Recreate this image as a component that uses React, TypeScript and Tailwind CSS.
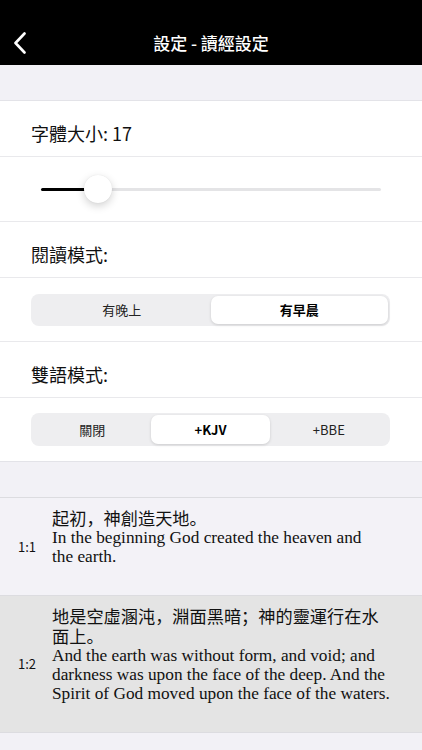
import React from "react";

const ui = { fontFamily: '"Noto Sans CJK TC", "Noto Sans", Roboto, sans-serif' };
const zhFont = { fontFamily: '"Noto Sans CJK SC", "Noto Sans CJK TC", sans-serif' };
const serif = { fontFamily: '"Liberation Serif", "Noto Sans CJK SC", serif' };

function Segmented({ items, selected }: { items: string[]; selected: number }) {
  return (
    <div className="flex h-full rounded-[8px] bg-[#eeeef0] p-[2px]">
      {items.map((it, i) => (
        <div
          key={it}
          className={
            i === selected
              ? "flex flex-1 items-center justify-center rounded-[7px] bg-white text-[13px] font-semibold text-black shadow-[0_1px_3px_rgba(0,0,0,0.15)]"
              : "flex flex-1 items-center justify-center text-[13px] text-[#222]"
          }
        >
          {it}
        </div>
      ))}
    </div>
  );
}

function Verse({ num, zh, en, bg, w }: { num: string; zh: string; en: string; bg: string; w: string }) {
  return (
    <div className={`flex border-b border-[#dcdce0] ${bg}`}>
      <div className="flex w-[52px] shrink-0 items-center pl-[18px] text-[13px] text-[#111]" style={ui}>
        {num}
      </div>
      <div className={`${w} pt-[10px] pb-[29px]`}>
        <div className="text-[17.2px] leading-[20px] text-[#111]" style={zhFont}>
          {zh}
        </div>
        <div className="text-[17.3px] leading-[19px] text-[#111]" style={serif}>
          {en}
        </div>
      </div>
    </div>
  );
}

export default function App() {
  return (
    <div className="min-h-[750px] w-[422px] bg-[#f2f1f6]" style={ui}>
      <div className="grid h-[65px] grid-cols-[60px_1fr_60px] items-center bg-black pt-[31px] pb-[10px]">
        <div className="flex items-center pl-[13px]">
          <svg width="14" height="22" viewBox="0 0 14 22" fill="none">
            <path d="M11.5 1.5 L2.5 11 L11.5 20.5" stroke="white" strokeWidth="2.6" strokeLinecap="round" strokeLinejoin="round" />
          </svg>
        </div>
        <div className="text-center text-[17px] font-medium leading-[24px] text-white">設定 - 讀經設定</div>
        <div />
      </div>
      <div className="h-[36px] border-b border-[#e3e3e8] bg-[#f2f1f6]" />
      <div className="bg-white">
        <div className="h-[56px] border-b border-[#e9e9ec] pl-[31px] pt-[20px] text-[18px] leading-[24px] text-[#111]">
          字體大小: 17
        </div>
        <div className="flex h-[65px] items-center border-b border-[#e9e9ec] px-[41px]">
          <div className="relative flex h-[28px] w-full items-center">
            <div className="h-[3px] w-[48px] rounded-full bg-black" />
            <div className="h-[3px] flex-1 rounded-full bg-[#e4e4e6]" />
            <div className="absolute left-[43px] top-0 h-[28px] w-[28px] rounded-full bg-white shadow-[0_3px_8px_rgba(0,0,0,0.18),0_0_1px_rgba(0,0,0,0.1)]" />
          </div>
        </div>
        <div className="h-[56px] border-b border-[#e9e9ec] pl-[31px] pt-[20px] text-[18px] leading-[24px] text-[#111]">
          閱讀模式:
        </div>
        <div className="h-[64px] border-b border-[#e9e9ec] px-[31px] pt-[16px]">
          <div className="h-[32px] w-[359px]">
            <Segmented items={["有晚上", "有早晨"]} selected={1} />
          </div>
        </div>
        <div className="h-[56px] border-b border-[#e9e9ec] pl-[31px] pt-[20px] text-[18px] leading-[24px] text-[#111]">
          雙語模式:
        </div>
        <div className="h-[64px] border-b border-[#e3e3e8] px-[31px] pt-[15px]">
          <div className="h-[33px] w-[359px]">
            <Segmented items={["關閉", "+KJV", "+BBE"]} selected={1} />
          </div>
        </div>
      </div>
      <div className="h-[36px] border-b border-[#dcdce0] bg-[#f2f1f6]" />
      <Verse
        num="1:1"
        zh="起初，神創造天地。"
        en="In the beginning God created the heaven and the earth."
        bg="bg-[#f3f2f7]"
        w="w-[318px]"
      />
      <Verse
        num="1:2"
        zh="地是空虛溷沌，淵面黑暗；神的靈運行在水面上。"
        en="And the earth was without form, and void; and darkness was upon the face of the deep. And the Spirit of God moved upon the face of the waters."
        bg="bg-[#e4e4e4]"
        w="w-[340px]"
      />
    </div>
  );
}
